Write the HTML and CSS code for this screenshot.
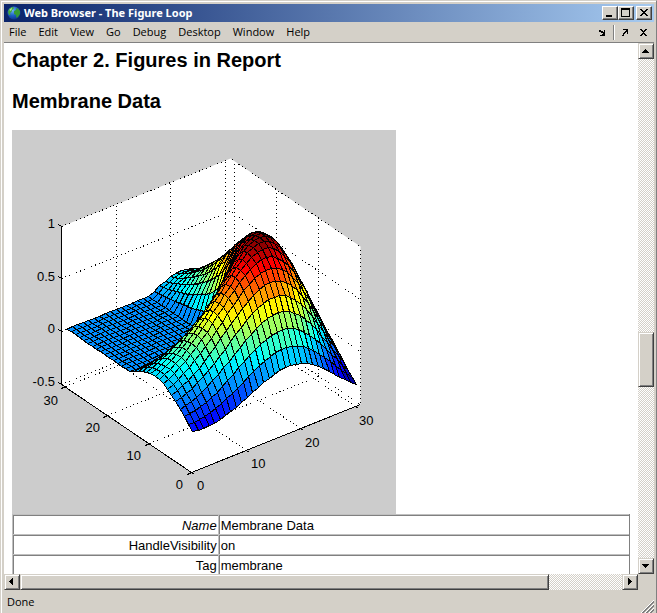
FILE: index.html
```html
<!DOCTYPE html>
<html lang="en">
<head>
<meta charset="utf-8">
<title>Web Browser - The Figure Loop</title>
<link rel="stylesheet" href="styles.css">
</head>
<body>
<div class="window">
  <header class="titlebar">
    <svg class="globe" viewBox="0 0 14 14" aria-hidden="true">
      <defs>
        <radialGradient id="sea" cx="0.4" cy="0.3" r="0.75">
          <stop offset="0" stop-color="#6fb4f4"/>
          <stop offset="0.5" stop-color="#1f62c8"/>
          <stop offset="1" stop-color="#0b2f86"/>
        </radialGradient>
      </defs>
      <circle cx="7" cy="7" r="6.5" fill="url(#sea)"/>
      <path d="M1 6 2 3 5 1 7 1.500 6.500 3 5 4 4.500 6 3 7 3.500 9 2 9Z" fill="#43a83c"/>
      <path d="M7 5 9 4 9.500 2 11 2.500 13 5 13 8 11 11 9.500 12 9 9 7 8Z" fill="#359a35"/>
      <path d="M2.500 3.500 5 1.800 4.500 4 3 5Z" fill="#b5e58c"/>
    </svg>
    <span class="caption">Web Browser - The Figure Loop</span>
    <div class="captionbuttons">
      <button class="bevel" aria-label="Minimize"><svg viewBox="0 0 12 10"><path d="M2 7h6v2H2z"/></svg></button>
      <button class="bevel" aria-label="Maximize"><svg viewBox="0 0 12 10"><path d="M1 0h9v9H1zM2 2v6h7V2z" fill-rule="evenodd"/></svg></button>
      <button class="bevel close" aria-label="Close"><svg viewBox="0 0 12 10"><path d="M2 1h2v1h1v1h2V2h1V1h2v1H9v1H8v1H7v1h1v1h1v1h1v1H8V7H7V6H5v1H4v1H2V7h1V6h1V5h1V4H4V3H3V2H2z"/></svg></button>
    </div>
  </header>

  <nav class="menubar">
    <button>File</button>
    <button>Edit</button>
    <button>View</button>
    <button>Go</button>
    <button>Debug</button>
    <button>Desktop</button>
    <button>Window</button>
    <button>Help</button>
    <div class="dockbuttons">
      <button aria-label="Dock"><svg viewBox="0 0 9 9"><path d="M1 2h2v1h2v1h1V2h1v6H2V7h2V6h1V5H3V4H1z"/></svg></button>
      <span class="separator"></span>
      <button aria-label="Undock"><svg viewBox="0 0 9 9"><path d="M2 1h5v5H6V4H5v1H4v1H3v2H1V7h1V5h1V4h1V3h1V2H2z"/></svg></button>
      <button aria-label="Close document"><svg viewBox="0 0 9 9"><path d="M1 1h2v1h1v1h1V2h1V1h2v1H7v1H6v1H5v1h1v1h1v1h1v1H6V7H5V6H4v1H3v1H1V7h1V6h1V5h1V4H3V3H2V2H1z"/></svg></button>
    </div>
  </nav>

  <div class="view">
    <main class="document">
      <h1>Chapter 2. Figures in Report</h1>
      <h2>Membrane Data</h2>
      <svg id="plot" class="plot" viewBox="0 0 384 384" role="img" aria-label="Surface plot of the membrane data"></svg>
      <table class="properties">
        <tbody>
          <tr><th scope="row"><em>Name</em></th><td>Membrane Data</td></tr>
          <tr><th scope="row">HandleVisibility</th><td>on</td></tr>
          <tr><th scope="row">Tag</th><td>membrane</td></tr>
        </tbody>
      </table>
    </main>
    <div class="scroll vertical">
      <button class="bevel" aria-label="Scroll up"><svg viewBox="0 0 12 12"><path d="M5 4h1v1h1v1h1v1h1v1H2V7h1V6h1V5h1z"/></svg></button>
      <div class="space before"></div>
      <div class="thumb bevel"></div>
      <div class="space after"></div>
      <button class="bevel" aria-label="Scroll down"><svg viewBox="0 0 12 12"><path d="M2 4h7v1H8v1H7v1H6v1H5V7H4V6H3V5H2z"/></svg></button>
    </div>
    <div class="scroll horizontal">
      <button class="bevel" aria-label="Scroll left"><svg viewBox="0 0 12 12"><path d="M7 2v7H6V8H5V7H4V6H3V5h1V4h1V3h1V2z"/></svg></button>
      <div class="thumb bevel"></div>
      <div class="space"></div>
      <button class="bevel" aria-label="Scroll right"><svg viewBox="0 0 12 12"><path d="M4 2v7h1V8h1V7h1V6h1V5H7V4H6V3H5V2z"/></svg></button>
    </div>
  </div>

  <footer class="status">
    <span>Done</span>
    <svg class="grip" viewBox="0 0 13 13" aria-hidden="true">
      <path d="M0 13 13 0M4 13 13 4M8 13 13 8" stroke="#fff"/>
      <path d="M1 13 13 1M2 13 13 2M5 13 13 5M6 13 13 6M9 13 13 9M10 13 13 10" stroke="#808080"/>
    </svg>
  </footer>
</div>
<script src="plot.js"></script>
</body>
</html>
```
FILE: styles.css
```css
* {
  box-sizing: border-box;
}

body {
  margin: 0;
  background: #d4d0c8;
  color: #000;
  font: 11px/14px "Open Sans", "Noto Sans", sans-serif;
}

button {
  margin: 0;
  padding: 0;
  border: 0;
  background: none;
  color: inherit;
  font: inherit;
}

button svg {
  display: block;
  shape-rendering: crispEdges;
}

.window {
  display: flex;
  flex-direction: column;
  height: 100vh;
  padding: 3px 2px 0 3px;
  border: 1px solid #d4d0c8;
  border-right-color: #808080;
  border-bottom: 0;
  box-shadow: inset 1px 1px #fff;
}

.bevel {
  background: #d4d0c8;
  border: 1px solid;
  border-color: #d4d0c8 #404040 #404040 #d4d0c8;
  box-shadow: inset 1px 1px #fff, inset -1px -1px #808080;
}

.titlebar {
  display: flex;
  align-items: center;
  height: 18px;
  padding: 0 2px 0 3px;
  background: linear-gradient(90deg, #0a246a, #a6caf0);
  color: #fff;
}

.globe {
  width: 14px;
  height: 14px;
}

.caption {
  flex: 1;
  margin-left: 3px;
  font-family: "Noto Sans", "Open Sans", sans-serif;
  font-weight: 700;
}

.captionbuttons {
  display: flex;
}

.captionbuttons button {
  width: 16px;
  height: 14px;
  padding: 1px;
  border-color: #fff #404040 #404040 #fff;
  box-shadow: inset -1px -1px #808080;
}

.captionbuttons .close {
  margin-left: 2px;
}

.captionbuttons svg {
  width: 12px;
  height: 10px;
}

.menubar {
  display: flex;
  align-items: center;
  height: 21px;
  padding: 0 6px 0 5px;
  gap: 12px;
  border-bottom: 1px solid #808080;
}

.dockbuttons {
  display: flex;
  align-items: center;
  gap: 6px;
  margin-left: auto;
}

.dockbuttons button:last-child {
  margin-left: 3px;
}

.dockbuttons svg {
  width: 9px;
  height: 9px;
}

.separator {
  width: 2px;
  height: 15px;
  border-left: 1px solid #808080;
  border-right: 1px solid #fff;
}

.view {
  flex: 1;
  min-height: 0;
  display: grid;
  grid-template-columns: minmax(0, 1fr) 16px;
  grid-template-rows: minmax(0, 1fr) 16px;
}

.document {
  overflow: hidden;
  padding: 5px 8px 0;
  background: #fff;
  font: 13px/18px "Liberation Sans", Arial, sans-serif;
}

h1,
h2 {
  margin: 0 0 17px;
  font-size: 20px;
  line-height: 24px;
}

.plot {
  display: block;
  width: 384px;
  max-width: 100%;
  background: #ccc;
}

.plot .box {
  fill: #fff;
}

.plot .grid {
  fill: none;
  stroke: #000;
  stroke-dasharray: 1 3;
  shape-rendering: crispEdges;
}

.plot .axis {
  fill: none;
  stroke: #000;
  shape-rendering: crispEdges;
}

.plot polygon {
  stroke: #000;
  stroke-linejoin: bevel;
  shape-rendering: crispEdges;
}

.plot .left {
  text-anchor: end;
}

.properties {
  width: 100%;
  border-spacing: 0;
  border: solid #808080;
  border-width: 0 1px 0 0;
}

.properties th,
.properties td {
  height: 20px;
  padding: 2px 1px 0 2px;
  border: solid #c0c0c0;
  border-width: 1px 0 0 1px;
  box-shadow: inset 1px 1px #808080;
  font-weight: 400;
  line-height: 17px;
  text-align: left;
}

.properties th {
  width: calc(100% / 3);
  text-align: right;
}

.scroll {
  display: flex;
}

.scroll button {
  flex: none;
  width: 16px;
  height: 16px;
  padding: 1px;
}

.scroll svg {
  width: 12px;
  height: 12px;
}

.vertical {
  flex-direction: column;
}

.space {
  flex: 1;
  background: repeating-conic-gradient(#fff 0 25%, #d4d0c8 0 50%) 0 0 / 2px 2px;
}

.vertical .thumb {
  flex: 0 0 55px;
}

.vertical .before {
  flex: 273;
}

.vertical .after {
  flex: 171;
}

.horizontal .thumb {
  flex: 0 0 83.5%;
}

.status {
  display: flex;
  align-items: center;
  justify-content: space-between;
  height: 23px;
  padding-left: 3px;
}

.grip {
  align-self: flex-end;
  width: 13px;
  height: 13px;
}
```
FILE: plot.js
```js
// First eigenfunction of the L-shaped membrane, sampled on a 31 x 31 grid
// and truncated after two terms, drawn as a faceted surface.
const M = 15;
const SIZE = 2 * M + 1;
const ROOT = Math.sqrt(9.6397238445);
const ORDERS = [1, 5, 7, 11, 13].map(n => n * 2 / 3);

// Bessel function of the first kind, up to a constant factor.
function bessel(order, t) {
  let term = Math.pow(t / 2, order);
  let sum = term;
  for (let k = 1; k < 40; k++) {
    term *= -(t * t / 4) / (k * (order + k));
    sum += term;
  }
  return sum;
}

const mode = (order, r, theta) => bessel(order, ROOT * r) * Math.sin(order * theta);

// Least-squares weights that make the sum vanish on the outer boundary.
function fitWeights() {
  const n = ORDERS.length;
  const rows = [];
  for (let i = 1; i <= 3 * M; i++) {
    const theta = i / M * Math.PI / 4;
    const r = i <= M ? 1 / Math.cos(theta) : 1 / Math.sin(theta);
    rows.push(ORDERS.map(order => mode(order, r, theta)));
  }
  const norms = ORDERS.map((_, j) => Math.hypot(...rows.map(row => row[j])));
  const a = [];
  for (let i = 1; i < n; i++) {
    const line = [];
    for (let j = 1; j < n; j++) {
      line.push(rows.reduce((s, row) => s + row[i] * row[j], 0) / norms[i] / norms[j]);
    }
    line.push(-rows.reduce((s, row) => s + row[i] * row[0], 0) / norms[i]);
    a.push(line);
  }
  for (let p = 0; p < n - 1; p++) {
    for (let i = 0; i < n - 1; i++) {
      if (i === p) continue;
      const f = a[i][p] / a[p][p];
      for (let j = p; j < n; j++) a[i][j] -= f * a[p][j];
    }
  }
  return [1, a[0][n - 1] / a[0][0] / norms[1]];
}

const weights = fitWeights();
const heights = [];
for (let x = 0; x < SIZE; x++) {
  heights.push([]);
  for (let y = 0; y < SIZE; y++) {
    const u = (x - M) / M;
    const v = (y - M) / M;
    let z = 0;
    if (!(u <= 0 && v >= 0)) {
      const r = Math.hypot(u, v);
      const theta = Math.atan2(v, u) + Math.PI;
      weights.forEach((w, j) => { z += w * mode(ORDERS[j], r, theta); });
    }
    heights[x].push(z);
  }
}
const all = heights.flat();
const peak = Math.max(...all.map(Math.abs));
const low = Math.min(...all) / peak;

const LIMIT = 31;
function project(x, y, z) {
  return [
    Math.round(179 + 169 * x / LIMIT - 130 * y / LIMIT) + 0.5,
    Math.floor(342 - 67.5 * x / LIMIT - 88 * y / LIMIT - 158 * (z + 0.5) / 1.5) + 0.5
  ];
}

const clamp = v => Math.max(0, Math.min(1, v));
function jet(z) {
  const i = Math.min(63, Math.floor((z - low) / (1 - low) * 64)) + 1;
  const channel = centre => Math.round(255 * clamp((24 - Math.abs(i - centre)) / 16));
  return `rgb(${channel(48)},${channel(32)},${channel(16)})`;
}

const parts = [];
const path = points => "M" + points.map(p => p.join(" ")).join("L");
const line = (cls, ...points) =>
  parts.push(`<path class="${cls}" d="${path(points.map(p => project(...p)))}"/>`);

line("box", [0, 0, -0.5], [0, 31, -0.5], [0, 31, 1], [31, 31, 1], [31, 0, 1], [31, 0, -0.5]);
for (const t of [0, 10, 20, 30]) {
  line("grid", [t, 0, -0.5], [t, 31, -0.5], [t, 31, 1]);
  line("grid", [0, t, -0.5], [31, t, -0.5], [31, t, 1]);
}
for (const z of [-0.5, 0, 0.5, 1]) {
  line("grid", [0, 31, z], [31, 31, z], [31, 0, z]);
}
line("axis", [0, 31, 1], [0, 31, -0.5], [0, 0, -0.5], [31, 0, -0.5]);

const tick = (x, y, z, dx, dy) => {
  const [px, py] = project(x, y, z);
  parts.push(`<path class="axis" d="M${px} ${py}l${dx} ${dy}"/>`);
};
for (const t of [0, 10, 20, 30]) {
  tick(t, 0, -0.5, 3, 2);
  tick(0, t, -0.5, -4, 2);
}
for (const z of [-0.5, 0, 0.5, 1]) tick(0, 31, z, -3, -2);

// Faces are painted from the far corner towards the viewer.
for (let x = SIZE - 2; x >= 0; x--) {
  for (let y = SIZE - 2; y >= 0; y--) {
    const corners = [[x, y], [x + 1, y], [x + 1, y + 1], [x, y + 1]]
      .map(([i, j]) => project(i + 1, j + 1, heights[i][j] / peak).join(","));
    parts.push(`<polygon points="${corners.join(" ")}" fill="${jet(heights[x][y] / peak)}"/>`);
  }
}

const label = (x, y, text, cls = "") =>
  parts.push(`<text class="${cls}" x="${x}" y="${y}">${text}</text>`);
label(43, 98, "1", "left");
label(43, 151, "0.5", "left");
label(43, 203, "0", "left");
label(43, 256, "-0.5", "left");
label(46, 275, "30", "left");
label(88, 302, "20", "left");
label(129, 330, "10", "left");
label(171, 359, "0", "left");
label(185, 360, "0");
label(239, 338, "10");
label(293, 317, "20");
label(347, 295, "30");

document.getElementById("plot").innerHTML = parts.join("");
```
